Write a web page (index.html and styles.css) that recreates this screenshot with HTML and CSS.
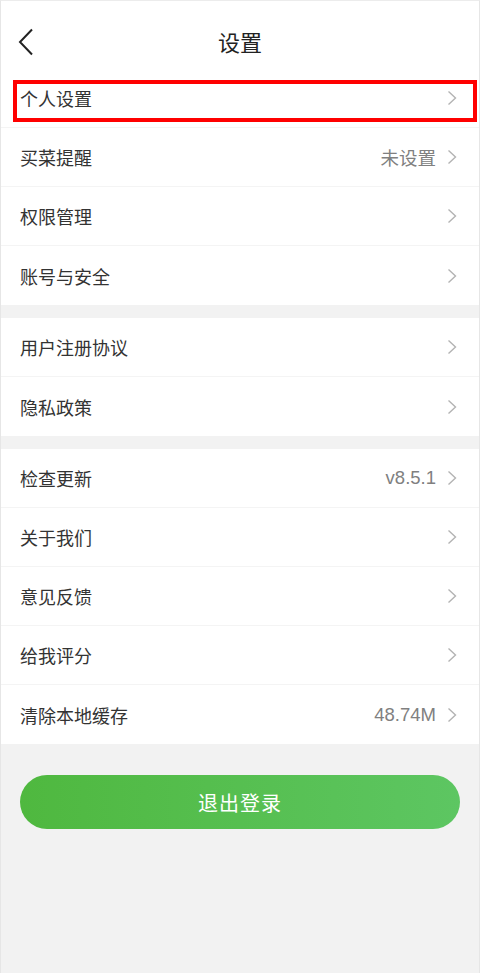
FILE: index.html
```html
<!DOCTYPE html>
<html lang="zh-CN">
<head>
    <meta charset="UTF-8">
    <meta name="viewport" content="width=device-width, initial-scale=1.0">
    <title>设置</title>
    <link rel="stylesheet" href="styles.css">
</head>
<body>

<div class="page">
    <header class="top-bar">
        <a class="back" href="#">
            <svg width="16" height="28" viewBox="0 0 16 28"><polyline points="14,1.5 2,14 14,26.5" fill="none" stroke="#222" stroke-width="2"/></svg>
        </a>
        <h1>设置</h1>
    </header>

    <div class="group">
        <div class="row">
            <span class="label">个人设置</span>
            <svg class="arrow" width="10" height="16" viewBox="0 0 10 16"><polyline points="1.5,1.5 8.5,8 1.5,14.5" fill="none" stroke="#b3b3b3" stroke-width="1.4"/></svg>
            <span class="mark"></span>
        </div>
        <div class="row">
            <span class="label">买菜提醒</span>
            <span class="value">未设置</span>
            <svg class="arrow" width="10" height="16" viewBox="0 0 10 16"><polyline points="1.5,1.5 8.5,8 1.5,14.5" fill="none" stroke="#b3b3b3" stroke-width="1.4"/></svg>
        </div>
        <div class="row">
            <span class="label">权限管理</span>
            <svg class="arrow" width="10" height="16" viewBox="0 0 10 16"><polyline points="1.5,1.5 8.5,8 1.5,14.5" fill="none" stroke="#b3b3b3" stroke-width="1.4"/></svg>
        </div>
        <div class="row">
            <span class="label">账号与安全</span>
            <svg class="arrow" width="10" height="16" viewBox="0 0 10 16"><polyline points="1.5,1.5 8.5,8 1.5,14.5" fill="none" stroke="#b3b3b3" stroke-width="1.4"/></svg>
        </div>
    </div>

    <div class="group">
        <div class="row">
            <span class="label">用户注册协议</span>
            <svg class="arrow" width="10" height="16" viewBox="0 0 10 16"><polyline points="1.5,1.5 8.5,8 1.5,14.5" fill="none" stroke="#b3b3b3" stroke-width="1.4"/></svg>
        </div>
        <div class="row">
            <span class="label">隐私政策</span>
            <svg class="arrow" width="10" height="16" viewBox="0 0 10 16"><polyline points="1.5,1.5 8.5,8 1.5,14.5" fill="none" stroke="#b3b3b3" stroke-width="1.4"/></svg>
        </div>
    </div>

    <div class="group">
        <div class="row">
            <span class="label">检查更新</span>
            <span class="value">v8.5.1</span>
            <svg class="arrow" width="10" height="16" viewBox="0 0 10 16"><polyline points="1.5,1.5 8.5,8 1.5,14.5" fill="none" stroke="#b3b3b3" stroke-width="1.4"/></svg>
        </div>
        <div class="row">
            <span class="label">关于我们</span>
            <svg class="arrow" width="10" height="16" viewBox="0 0 10 16"><polyline points="1.5,1.5 8.5,8 1.5,14.5" fill="none" stroke="#b3b3b3" stroke-width="1.4"/></svg>
        </div>
        <div class="row">
            <span class="label">意见反馈</span>
            <svg class="arrow" width="10" height="16" viewBox="0 0 10 16"><polyline points="1.5,1.5 8.5,8 1.5,14.5" fill="none" stroke="#b3b3b3" stroke-width="1.4"/></svg>
        </div>
        <div class="row">
            <span class="label">给我评分</span>
            <svg class="arrow" width="10" height="16" viewBox="0 0 10 16"><polyline points="1.5,1.5 8.5,8 1.5,14.5" fill="none" stroke="#b3b3b3" stroke-width="1.4"/></svg>
        </div>
        <div class="row">
            <span class="label">清除本地缓存</span>
            <span class="value">48.74M</span>
            <svg class="arrow" width="10" height="16" viewBox="0 0 10 16"><polyline points="1.5,1.5 8.5,8 1.5,14.5" fill="none" stroke="#b3b3b3" stroke-width="1.4"/></svg>
        </div>
    </div>

    <button class="logout" type="button">退出登录</button>
</div>

</body>
</html>
```

FILE: styles.css
```css
body, html {
    margin: 0;
    padding: 0;
    font-family: "Liberation Sans", "Noto Sans CJK SC", sans-serif;
    background-color: #f2f2f2;
}
.page {
    min-height: 973px;
    box-sizing: border-box;
    border-left: 1px solid #e6e6e6;
    border-right: 1px solid #e6e6e6;
    border-top: 1px solid #ececec;
}
.top-bar {
    position: relative;
    height: 68px;
    box-sizing: border-box;
    padding-top: 18px;
    background-color: #fff;
    text-align: center;
}
.top-bar h1 {
    margin: 0;
    font-size: 22px;
    font-weight: normal;
    line-height: 50px;
    color: #222;
}
.back {
    position: absolute;
    left: 17px;
    top: 27px;
    display: block;
    line-height: 0;
}
.group {
    background-color: #fff;
    margin-bottom: 13px;
}
.row {
    position: relative;
    display: flex;
    align-items: center;
    height: 59px;
    box-sizing: border-box;
    padding: 0 22px 0 19px;
    border-bottom: 1px solid #f4f4f4;
}
.row:last-child {
    border-bottom: none;
}
.label {
    flex: 1;
    font-size: 18px;
    color: #333;
}
.value {
    font-size: 18.5px;
    color: #808080;
    margin-right: 11px;
}
.arrow {
    display: block;
}
.mark {
    position: absolute;
    left: 12px;
    right: 2px;
    top: 11px;
    bottom: 5px;
    border: 4px solid #f00;
}
.logout {
    display: block;
    width: 440px;
    height: 54px;
    margin: 31px auto 0;
    border: none;
    border-radius: 27px;
    background: linear-gradient(90deg, #4fb83f, #5dc662);
    color: #fff;
    font-family: "Liberation Sans", "Noto Sans CJK SC", sans-serif;
    font-size: 20px;
    letter-spacing: 1px;
    cursor: pointer;
}
```
